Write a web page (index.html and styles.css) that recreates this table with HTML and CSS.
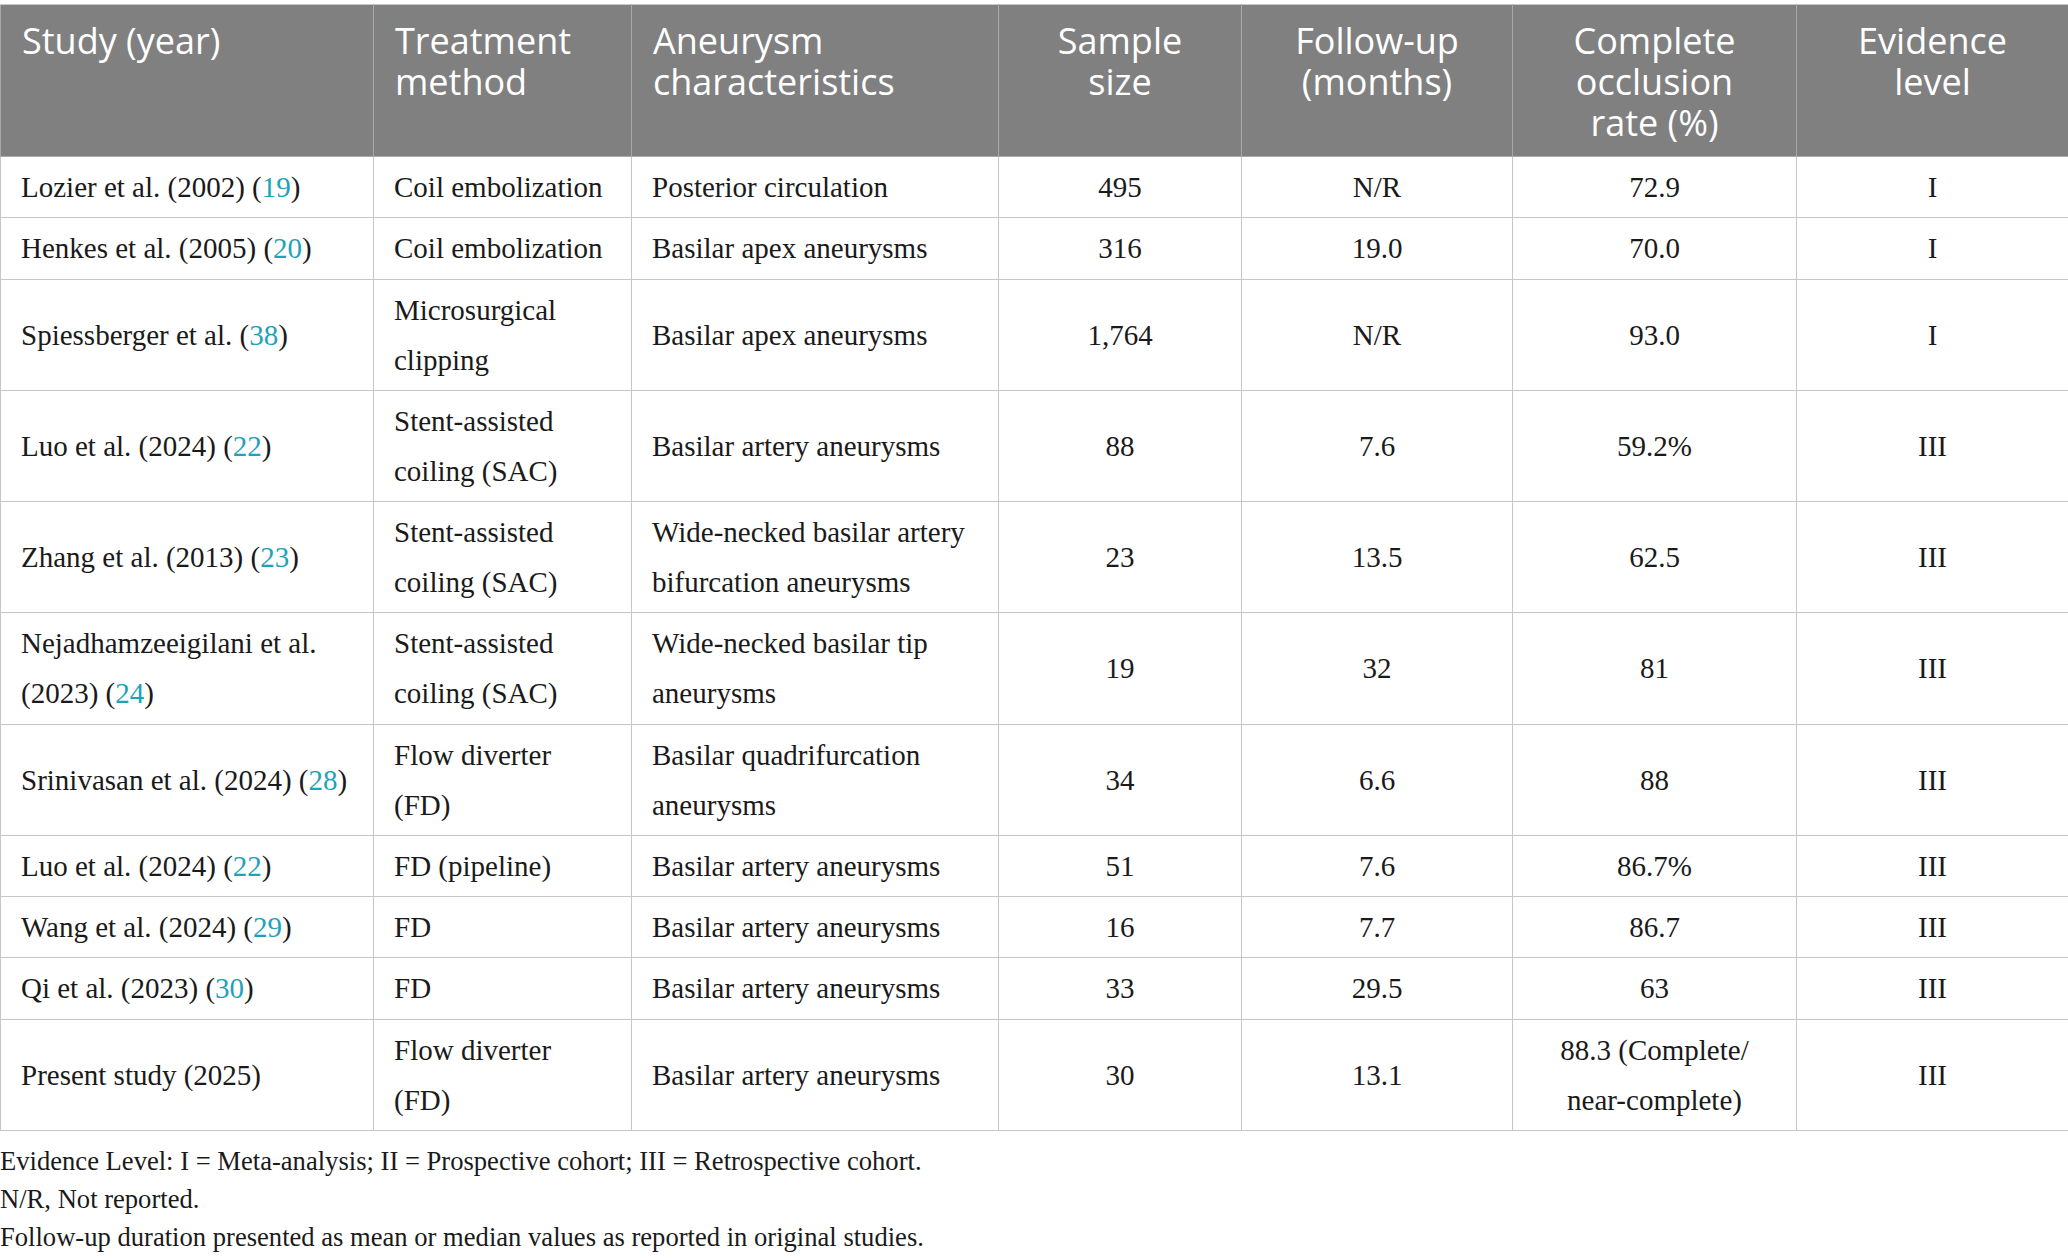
FILE: index.html
```html
<!DOCTYPE html>
<html>
<head>
<meta charset="utf-8">
<link rel="stylesheet" href="styles.css">
</head>
<body>
<div class="page">
<table class="data">
  <colgroup>
    <col class="c1"><col class="c2"><col class="c3"><col class="c4"><col class="c5"><col class="c6"><col class="c7">
  </colgroup>
  <thead>
    <tr>
      <th>Study (year)</th>
      <th>Treatment<br>method</th>
      <th>Aneurysm<br>characteristics</th>
      <th class="ctr">Sample<br>size</th>
      <th class="ctr">Follow-up<br>(months)</th>
      <th class="ctr">Complete<br>occlusion<br>rate (%)</th>
      <th class="ctr">Evidence<br>level</th>
    </tr>
  </thead>
  <tbody>
    <tr><td>Lozier et al. (2002) (<a class="ref">19</a>)</td><td>Coil embolization</td><td>Posterior circulation</td><td class="ctr">495</td><td class="ctr">N/R</td><td class="ctr">72.9</td><td class="ctr">I</td></tr>
    <tr><td>Henkes et al. (2005) (<a class="ref">20</a>)</td><td>Coil embolization</td><td>Basilar apex aneurysms</td><td class="ctr">316</td><td class="ctr">19.0</td><td class="ctr">70.0</td><td class="ctr">I</td></tr>
    <tr><td>Spiessberger et al. (<a class="ref">38</a>)</td><td>Microsurgical clipping</td><td>Basilar apex aneurysms</td><td class="ctr">1,764</td><td class="ctr">N/R</td><td class="ctr">93.0</td><td class="ctr">I</td></tr>
    <tr><td>Luo et al. (2024) (<a class="ref">22</a>)</td><td>Stent-assisted coiling (SAC)</td><td>Basilar artery aneurysms</td><td class="ctr">88</td><td class="ctr">7.6</td><td class="ctr">59.2%</td><td class="ctr">III</td></tr>
    <tr><td>Zhang et al. (2013) (<a class="ref">23</a>)</td><td>Stent-assisted coiling (SAC)</td><td>Wide-necked basilar artery bifurcation aneurysms</td><td class="ctr">23</td><td class="ctr">13.5</td><td class="ctr">62.5</td><td class="ctr">III</td></tr>
    <tr><td>Nejadhamzeeigilani et al. (2023) (<a class="ref">24</a>)</td><td>Stent-assisted coiling (SAC)</td><td>Wide-necked basilar tip aneurysms</td><td class="ctr">19</td><td class="ctr">32</td><td class="ctr">81</td><td class="ctr">III</td></tr>
    <tr><td>Srinivasan et al. (2024) (<a class="ref">28</a>)</td><td>Flow diverter (FD)</td><td>Basilar quadrifurcation aneurysms</td><td class="ctr">34</td><td class="ctr">6.6</td><td class="ctr">88</td><td class="ctr">III</td></tr>
    <tr><td>Luo et al. (2024) (<a class="ref">22</a>)</td><td>FD (pipeline)</td><td>Basilar artery aneurysms</td><td class="ctr">51</td><td class="ctr">7.6</td><td class="ctr">86.7%</td><td class="ctr">III</td></tr>
    <tr><td>Wang et al. (2024) (<a class="ref">29</a>)</td><td>FD</td><td>Basilar artery aneurysms</td><td class="ctr">16</td><td class="ctr">7.7</td><td class="ctr">86.7</td><td class="ctr">III</td></tr>
    <tr><td>Qi et al. (2023) (<a class="ref">30</a>)</td><td>FD</td><td>Basilar artery aneurysms</td><td class="ctr">33</td><td class="ctr">29.5</td><td class="ctr">63</td><td class="ctr">III</td></tr>
    <tr><td>Present study (2025)</td><td>Flow diverter (FD)</td><td>Basilar artery aneurysms</td><td class="ctr">30</td><td class="ctr">13.1</td><td class="ctr">88.3 (Complete/ near-complete)</td><td class="ctr">III</td></tr>
  </tbody>
</table>
<div class="notes">
  <p>Evidence Level: I = Meta-analysis; II = Prospective cohort; III = Retrospective cohort.</p>
  <p>N/R, Not reported.</p>
  <p>Follow-up duration presented as mean or median values as reported in original studies.</p>
</div>
</div>
</body>
</html>
```
FILE: styles.css
```css
html, body {
  margin: 0;
  padding: 0;
  background: #ffffff;
}
.page {
  padding-top: 4px;
  width: 2068px;
}
.data {
  width: 2068px;
  border-collapse: collapse;
  table-layout: fixed;
  font-family: "Liberation Serif", "Times New Roman", serif;
  font-size: 29px;
  color: #1a1a1a;
}
.c1 { width: 373px; }
.c2 { width: 258px; }
.c3 { width: 367px; }
.c4 { width: 243px; }
.c5 { width: 271px; }
.c6 { width: 284px; }
.c7 { width: 272px; }
.data th {
  background: #808080;
  color: #ffffff;
  font-family: "Open Sans", "Noto Sans", sans-serif;
  font-weight: 400;
  font-size: 36px;
  line-height: 41px;
  text-align: left;
  vertical-align: top;
  padding: 15px 12px 13px 21px;
  border: 1px solid #a9a9a9;
  border-top-color: #c8c8c8;
  white-space: nowrap;
}
.data th.ctr {
  padding-left: 12px;
}
.data td {
  line-height: 50px;
  padding: 5px 20px 5.25px 20px;
  border: 1px solid #c6c6c6;
  vertical-align: middle;
  text-align: left;
}
.data th.ctr, .data td.ctr {
  text-align: center;
}
.ref {
  color: #1fa2b8;
  text-decoration: none;
}
.notes {
  font-family: "Liberation Serif", "Times New Roman", serif;
  font-size: 26.6px;
  color: #1a1a1a;
  padding-top: 11px;
}
.notes p {
  margin: 0;
  line-height: 38px;
}
```
